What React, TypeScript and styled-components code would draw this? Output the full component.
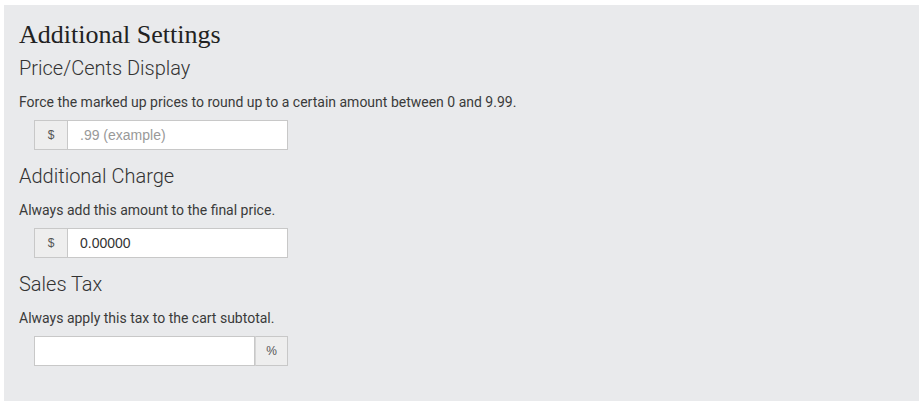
import React from 'react'
import styled, {createGlobalStyle} from "styled-components"

const GlobalStyle = createGlobalStyle`
    html, body {
        margin: 0;
        padding: 0;
        background: #ffffff;
    }
    body {
        font-family: Roboto, "Liberation Sans", Arial, sans-serif;
        color: #333;
    }
`

interface FieldProps {
    title: string,
    hint: string,
    addon: string,
    addonSide: "left" | "right",
    value?: string,
    placeholder?: string
}

function SettingField({title, hint, addon, addonSide, value, placeholder}: FieldProps) {
    return (
        <Section>
            <SubTitle>{title}</SubTitle>
            <Hint>{hint}</Hint>
            <InputGroup>
                {addonSide === "left" && <Addon side="left">{addon}</Addon>}
                <Field defaultValue={value} placeholder={placeholder}/>
                {addonSide === "right" && <Addon side="right">{addon}</Addon>}
            </InputGroup>
        </Section>
    )
}

export default function App() {
    return (
        <>
            <GlobalStyle/>
            <Page>
                <Panel>
                    <Title>Additional Settings</Title>
                    <SettingField
                        title="Price/Cents Display"
                        hint="Force the marked up prices to round up to a certain amount between 0 and 9.99."
                        addon="$"
                        addonSide="left"
                        placeholder=".99 (example)"
                    />
                    <SettingField
                        title="Additional Charge"
                        hint="Always add this amount to the final price."
                        addon="$"
                        addonSide="left"
                        value="0.00000"
                    />
                    <SettingField
                        title="Sales Tax"
                        hint="Always apply this tax to the cart subtotal."
                        addon="%"
                        addonSide="right"
                    />
                </Panel>
            </Page>
        </>
    )
}

const Page = styled.div`
    padding: 5px 4px 5px 4px;
`

const Panel = styled.div`
    background-color: #e9eaec;
    width: 915px;
    height: 396px;
    box-sizing: border-box;
    padding: 15px 15px;
    display: flex;
    flex-direction: column;
`

const Title = styled.h1`
    margin: 0;
    font-family: "Liberation Serif", "DejaVu Serif", serif;
    font-weight: normal;
    font-size: 26px;
    line-height: 30px;
    color: #222;
`

const Section = styled.div`
    display: flex;
    flex-direction: column;
    margin-top: 6px;
    & + & {
        margin-top: 14px;
    }
`

const SubTitle = styled.h2`
    margin: 0;
    font-family: Roboto, "Liberation Sans", sans-serif;
    font-weight: 300;
    font-size: 20px;
    line-height: 24px;
    color: #333;
`

const Hint = styled.p`
    margin: 13px 0 0 0;
    font-size: 14px;
    line-height: 18px;
    color: #3a3a3a;
`

const InputGroup = styled.div`
    margin: 9px 0 0 15px;
    width: 254px;
    height: 30px;
    display: flex;
    box-sizing: border-box;
`

const Addon = styled.span<{side: "left" | "right"}>`
    width: 33px;
    flex: none;
    box-sizing: border-box;
    display: flex;
    align-items: center;
    justify-content: center;
    background-color: #eeeeee;
    border: 1px solid #c8c8c8;
    ${props => props.side === "left" ? "border-right: none;" : "border-left: 1px solid #d6d6d6;"}
    font-family: "Liberation Sans", Arial, sans-serif;
    font-size: 12px;
    color: #555;
`

const Field = styled.input`
    flex: 1;
    min-width: 0;
    box-sizing: border-box;
    height: 30px;
    border: 1px solid #c8c8c8;
    background: #fff;
    padding: 0 12px;
    font-family: "Liberation Sans", Arial, sans-serif;
    font-size: 14px;
    color: #333;
    outline: none;
    &::placeholder {
        color: #999;
    }
`
